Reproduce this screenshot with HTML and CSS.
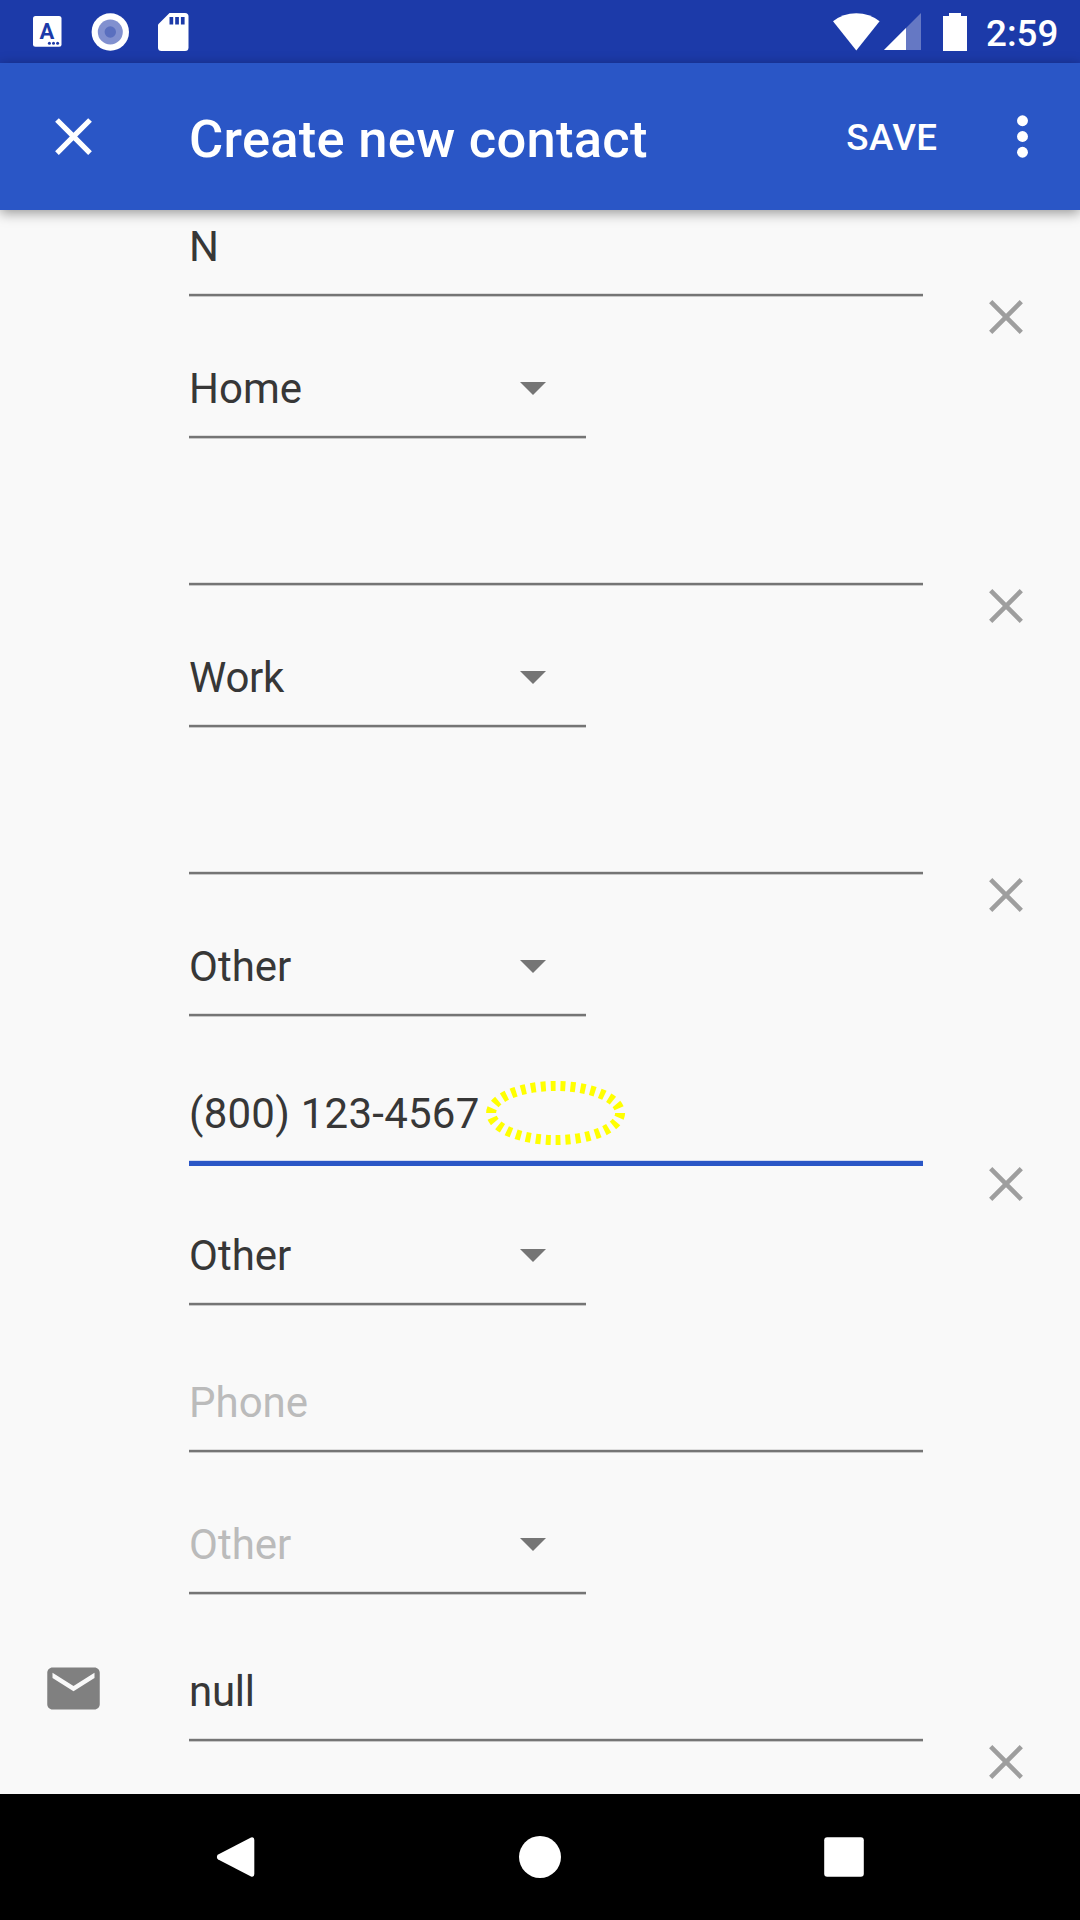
FILE: index.html
```html
<!DOCTYPE html>
<html lang="en">
<head>
<meta charset="utf-8">
<title>Create new contact</title>
<link rel="stylesheet" href="styles.css">
</head>
<body>
<svg class="defs" aria-hidden="true">
  <symbol id="remove" viewBox="0 0 34 34"><path d="M1.700 1.700 32.300 32.300M32.300 1.700 1.700 32.300" fill="none" stroke="currentColor" stroke-width="4.600"/></symbol>
  <symbol id="caret" viewBox="0 0 10 5"><path d="M0 0h10L5 5z" fill="currentColor"/></symbol>
</svg>
<div class="screen">
  <header class="status">
    <div class="status-left">
      <svg width="29" height="31" viewBox="0 0 29 31"><rect width="28.500" height="30.700" rx="2.500" fill="#fff"/><text class="badge-letter" x="14" y="22.500" text-anchor="middle">A</text><g fill="#1c3aa9"><circle cx="16.400" cy="27.200" r="1.500"/><circle cx="20.500" cy="27.200" r="1.500"/><circle cx="24.600" cy="27.200" r="1.500"/></g></svg>
      <svg class="disc" width="38" height="38" viewBox="0 0 38 38"><circle cx="19.300" cy="19" r="18.700" fill="#fff"/><circle cx="19.300" cy="19" r="12.500" fill="#8190cf"/><circle cx="19.300" cy="19" r="5.700" fill="#5a6fbf"/></svg>
      <svg class="card" width="31" height="38" viewBox="0 0 31 38"><path d="M11.500 0H27a3.500 3.500 0 0 1 3.500 3.500V34.500A3.500 3.500 0 0 1 27 38H3.500A3.500 3.500 0 0 1 0 34.500V11.500z" fill="#fff"/><path d="M11.500 4h3.700v7.500h-3.700zM17.200 4h3.700v7.500h-3.700zM22.900 4h3.700v7.500h-3.700z" fill="#1c3aa9"/></svg>
    </div>
    <div class="status-right">
      <svg width="47" height="38" viewBox="0 0 47 38"><path d="M0 8.300Q10 .2 23.300 .2T46.600 8.300L23.300 37.500z" fill="#fff"/></svg>
      <svg class="signal" width="37" height="37" viewBox="0 0 37 37"><path d="M37 0V37H0z" fill="#6578c4"/><path d="M22 15V37H0z" fill="#fff"/></svg>
      <svg class="battery" width="24" height="38" viewBox="0 0 24 38"><path d="M6 0h12v3h6v35H0V3h6z" fill="#fff"/></svg>
      <span class="clock">2:59</span>
    </div>
  </header>

  <div class="appbar">
    <svg class="close" width="63" height="63" viewBox="0 0 24 24"><path fill="#fff" d="M19 6.410 17.590 5 12 10.590 6.410 5 5 6.410 10.590 12 5 17.590 6.410 19 12 13.410 17.590 19 19 17.590 13.410 12z"/></svg>
    <h1 class="title">Create new contact</h1>
    <span class="save">SAVE</span>
    <svg class="more" width="63" height="63" viewBox="0 0 24 24" fill="#fff"><circle cx="12" cy="6" r="2.080"/><circle cx="12" cy="12" r="2.080"/><circle cx="12" cy="18" r="2.080"/></svg>
  </div>

  <main class="form">
    <section class="entry">
      <div class="fields">
        <div class="field"><span class="value">N</span><i class="rule"></i></div>
        <div class="select"><span class="value">Home<svg class="caret"><use href="#caret"/></svg></span><i class="rule"></i></div>
      </div>
      <svg class="remove"><use href="#remove"/></svg>
    </section>
    <section class="entry">
      <div class="fields">
        <div class="field"><span class="value"></span><i class="rule"></i></div>
        <div class="select"><span class="value tight">Work<svg class="caret"><use href="#caret"/></svg></span><i class="rule"></i></div>
      </div>
      <svg class="remove"><use href="#remove"/></svg>
    </section>
    <section class="entry">
      <div class="fields">
        <div class="field"><span class="value"></span><i class="rule"></i></div>
        <div class="select"><span class="value">Other<svg class="caret"><use href="#caret"/></svg></span><i class="rule"></i></div>
      </div>
      <svg class="remove"><use href="#remove"/></svg>
    </section>
    <section class="entry">
      <div class="fields">
        <div class="field focused"><span class="value">(800) 123-4567</span><i class="rule"></i>
          <svg class="marker" width="140" height="64" viewBox="0 0 140 64"><ellipse cx="69.600" cy="32" rx="64.500" ry="27" pathLength="300" fill="none" stroke="#ff0" stroke-width="10" stroke-dasharray="5 5"/></svg>
        </div>
        <div class="select"><span class="value">Other<svg class="caret"><use href="#caret"/></svg></span><i class="rule"></i></div>
      </div>
      <svg class="remove"><use href="#remove"/></svg>
    </section>
    <section class="entry hint">
      <div class="fields">
        <div class="field"><span class="value">Phone</span><i class="rule"></i></div>
        <div class="select"><span class="value">Other<svg class="caret"><use href="#caret"/></svg></span><i class="rule"></i></div>
      </div>
    </section>
    <section class="entry">
      <svg class="mail" width="63" height="63" viewBox="0 0 24 24"><path fill="#808080" d="M20 4H4c-1.100 0-1.990.9-1.990 2L2 18c0 1.100.9 2 2 2h16c1.100 0 2-.9 2-2V6c0-1.100-.9-2-2-2zm0 4-8 5-8-5V6l8 5 8-5v2z"/></svg>
      <div class="fields">
        <div class="field"><span class="value tight">null</span><i class="rule"></i></div>
      </div>
      <svg class="remove"><use href="#remove"/></svg>
    </section>
  </main>

  <nav class="navbar">
    <svg width="42" height="42" viewBox="0 0 42 42"><path d="M36 1.500 3.200 18.600a3 3 0 0 0 0 5L36 40.600q3.300 1 3.300-2.500V4q0-3.500-3.300-2.500z" fill="#fff"/></svg>
    <svg width="42" height="42" viewBox="0 0 42 42"><circle cx="21" cy="21" r="21" fill="#fff"/></svg>
    <svg width="42" height="42" viewBox="0 0 42 42"><rect x="1.200" y="1.200" width="39.600" height="39.600" rx="3" fill="#fff"/></svg>
  </nav>
</div>
</body>
</html>
```
FILE: styles.css
```css
* { box-sizing: border-box; }
body { margin: 0; background: #f9f9f9; font-family: Roboto, sans-serif; }
svg { display: block; flex: none; }
.defs { display: none; }

.screen {
  width: 1080px;
  height: 1920px;
  display: flex;
  flex-direction: column;
  overflow: hidden;
}

.status {
  flex: none;
  height: 63px;
  display: flex;
  justify-content: space-between;
  padding: 0 22px 0 33px;
  background: #1c3aa9;
}
.status-left, .status-right { display: flex; align-items: center; }
.badge-letter { font-size: 22px; font-weight: 700; fill: #1c3aa9; }
.disc { margin-left: 29px; }
.card { margin-left: 29px; }
.signal { margin-left: 4px; }
.battery { margin-left: 22px; }
.clock {
  margin-left: 19px;
  width: 72px;
  color: #fff;
  font-size: 36.75px;
  font-weight: 500;
  line-height: 43px;
  padding-top: 3px;
}

.appbar {
  flex: none;
  height: 147px;
  display: flex;
  align-items: center;
  padding: 0 26px 0 42px;
  background: #2a56c6;
  color: #fff;
  box-shadow: 0 3px 12px rgba(0, 0, 0, .4);
  z-index: 1;
}
.title {
  margin: 0 auto 0 84px;
  padding-top: 4px;
  font-size: 52.5px;
  font-weight: 500;
  line-height: 62px;
  letter-spacing: .27px;
}
.save {
  margin-right: 53.5px;
  padding-top: 2px;
  font-size: 36.75px;
  font-weight: 500;
  line-height: 43px;
  letter-spacing: .4px;
}

.form { flex: 1; min-height: 0; overflow: hidden; color: #373737; }
.entry {
  height: 289px;
  display: grid;
  grid-template-columns: 189px 734px 1fr;
  align-items: start;
}
.entry:first-child { margin-top: -60px; }
.fields { grid-column: 2; grid-row: 1; }
.field, .select {
  display: flex;
  flex-direction: column;
  justify-content: flex-end;
  height: 147px;
}
.field { position: relative; }
.select { height: 142px; width: 397px; }
.value {
  display: flex;
  justify-content: space-between;
  align-items: center;
  height: 49px;
  margin-bottom: 22px;
  padding-right: 40px;
  font-size: 42px;
  line-height: 49px;
}
.tight { letter-spacing: -.25px; }
.focused .value { letter-spacing: .25px; }
.hint .value { color: #bbb; }
.caret { width: 26px; height: 13px; color: #757575; }
.rule {
  flex: none;
  height: 4px;
  background: linear-gradient(#dedede 1px, #757575 1px 3px, #c8c8c8 3px);
}
.focused .rule {
  height: 6px;
  margin-bottom: -2px;
  background: linear-gradient(#d4dcf1 1px, #2a56c6 1px);
}
.marker { position: absolute; left: 297px; top: 64px; }
.remove {
  grid-column: 3;
  grid-row: 1;
  width: 34px;
  height: 34px;
  margin: 150px 0 0 66px;
  color: #9e9e9e;
}
.mail { grid-column: 1; grid-row: 1; margin: 62px 0 0 42px; }

.navbar {
  flex: none;
  height: 126px;
  display: flex;
  align-items: center;
  justify-content: space-between;
  padding: 0 215px;
  background: #000;
}
```
